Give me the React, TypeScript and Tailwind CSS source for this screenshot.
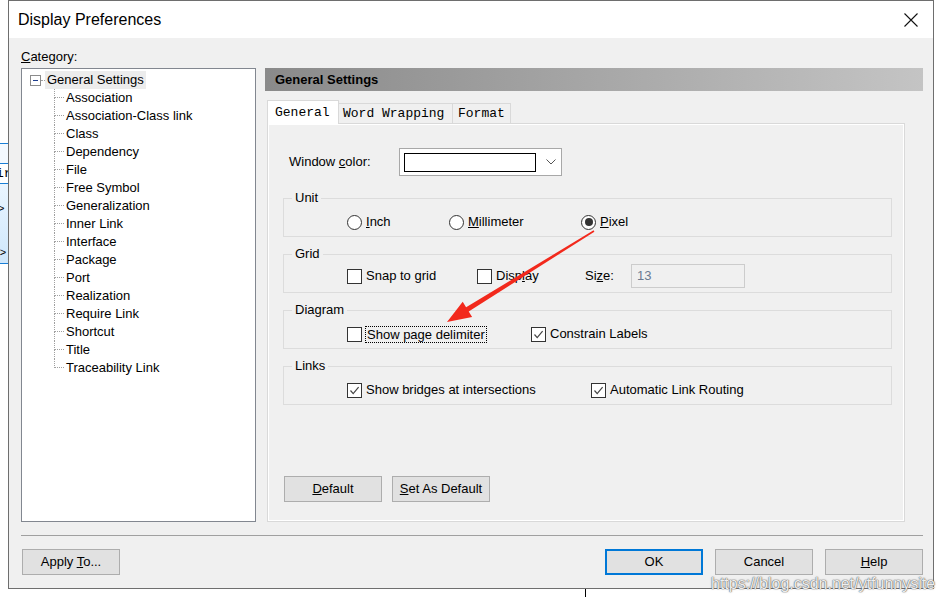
import * as React from "react";

const treeItems = [
  "Association",
  "Association-Class link",
  "Class",
  "Dependency",
  "File",
  "Free Symbol",
  "Generalization",
  "Inner Link",
  "Interface",
  "Package",
  "Port",
  "Realization",
  "Require Link",
  "Shortcut",
  "Title",
  "Traceability Link",
];

function CheckBox({ checked }: { checked?: boolean }) {
  return (
    <span className="flex h-[15px] w-[15px] shrink-0 items-center justify-center border border-[#333333] bg-white">
      {checked && (
        <svg width="13" height="13" viewBox="0 0 13 13">
          <path d="M2.5 6.5 L5.2 9.6 L10.6 3.2" fill="none" stroke="#444" strokeWidth="1.2" />
        </svg>
      )}
    </span>
  );
}

function Radio({ checked }: { checked?: boolean }) {
  return (
    <span className="flex h-[15px] w-[15px] shrink-0 items-center justify-center rounded-full border border-[#333333] bg-white">
      {checked && <span className="h-[8px] w-[8px] rounded-full bg-[#333333]" />}
    </span>
  );
}

function Option({
  width,
  radio,
  checked,
  children,
  focus,
}: {
  width: number;
  radio?: boolean;
  checked?: boolean;
  children: React.ReactNode;
  focus?: boolean;
}) {
  return (
    <div className="flex shrink-0 items-center" style={{ width }}>
      {radio ? <Radio checked={checked} /> : <CheckBox checked={checked} />}
      <span
        className={
          focus
            ? "ml-[3px] border border-dotted border-black px-[1px] leading-[15px]"
            : "ml-[4px] leading-[16px]"
        }
      >
        {children}
      </span>
    </div>
  );
}

function Group({
  label,
  children,
  tall,
}: {
  label: string;
  children: React.ReactNode;
  tall?: boolean;
}) {
  return (
    <fieldset
      className={
        tall
          ? "ml-[14px] w-[609px] border border-[#dcdcdc] pb-[4px]"
          : "ml-[14px] w-[609px] border border-[#dcdcdc] pb-[3px]"
      }
    >
      <legend className="ml-[8px] px-[3px] leading-[16px]">{label}</legend>
      <div
        className={
          tall
            ? "mt-[2px] flex h-[24px] items-center pl-[63px]"
            : "mt-[5px] flex h-[22px] items-center pl-[63px]"
        }
      >
        {children}
      </div>
    </fieldset>
  );
}

function Btn({
  children,
  primary,
}: {
  children: React.ReactNode;
  primary?: boolean;
}) {
  return (
    <button
      type="button"
      className={
        primary
          ? "flex h-[26px] w-[98px] items-center justify-center border-2 border-[#0078d7] bg-[#e1e1e1] text-[13px]"
          : "flex h-[26px] w-[98px] items-center justify-center border border-[#adadad] bg-[#e1e1e1] text-[13px]"
      }
    >
      <span>{children}</span>
    </button>
  );
}

function Tree() {
  return (
    <div className="h-[454px] w-[235px] shrink-0 border border-[#828790] bg-white pt-[2px] text-[13px]">
      <div className="flex h-[18px] items-center pl-[8px]">
        <span className="flex h-[11px] w-[11px] items-center justify-center border border-[#8c8c8c] bg-white">
          <span className="h-px w-[5px] bg-[#1f3f8f]" />
        </span>
        <span className="w-[4px] border-b border-dotted border-[#a0a0a0]" />
        <span className="flex h-[18px] items-center bg-[#ececec] px-[2px]">General Settings</span>
      </div>
      {treeItems.map((item, i) => (
        <div key={item} className="flex h-[18px] pl-[32px]">
          <div className="flex w-[10px] flex-col">
            <span className="h-[9px] border-b border-l border-dotted border-[#a0a0a0]" />
            <span
              className={
                i === treeItems.length - 1
                  ? "h-[9px]"
                  : "h-[9px] border-l border-dotted border-[#a0a0a0]"
              }
            />
          </div>
          <span className="ml-[2px] leading-[18px]">{item}</span>
        </div>
      ))}
    </div>
  );
}

function SettingsPanel() {
  return (
    <div className="ml-[9px] flex w-[658px] flex-col">
      <div className="flex h-[23px] items-center bg-gradient-to-r from-[#8a8a8a] to-[#c4c4c4] pl-[10px] text-[13px] font-bold">
        General Settings
      </div>
      <div className="ml-[2px] mt-[10px] flex h-[22px] items-end font-['Liberation_Mono',monospace] text-[13px]">
        <div className="relative z-10 mb-[-1px] flex h-[24px] w-[72px] items-center border-x border-t border-[#d9d9d9] bg-white pl-[7px]">
          General
        </div>
        <div className="flex h-[20px] w-[114px] items-center border-r border-t border-[#d9d9d9] bg-[#f0f0f0] pl-[4px]">
          Word Wrapping
        </div>
        <div className="flex h-[20px] w-[58px] items-center border-r border-t border-[#d9d9d9] bg-[#f0f0f0] pl-[5px]">
          Format
        </div>
      </div>
      <div className="ml-[2px] h-[399px] w-[638px] border border-[#d9d9d9]">
        <div className="h-full border border-white pt-[23px]">
          <div className="flex h-[28px] items-center pl-[20px]">
            <span className="w-[110px]">
              Window <u>c</u>olor:
            </span>
            <div className="flex h-[28px] w-[163px] items-center border border-[#a8a8a8] bg-white pl-[4px]">
              <span className="h-[19px] w-[132px] border border-black bg-white" />
              <svg className="ml-[10px]" width="10" height="6" viewBox="0 0 10 6">
                <path d="M0.5 0.5 L5 5 L9.5 0.5" fill="none" stroke="#555" strokeWidth="1" />
              </svg>
            </div>
          </div>
          <div className="mt-[14px] flex flex-col gap-[9px]">
            <Group label="Unit">
              <Option width={102} radio>
                <u>I</u>nch
              </Option>
              <Option width={132} radio>
                <u>M</u>illimeter
              </Option>
              <Option width={80} radio checked>
                <u>P</u>ixel
              </Option>
            </Group>
            <Group label="Grid" tall>
              <Option width={130}>
                Snap to <u>g</u>rid
              </Option>
              <Option width={108}>
                Disp<u>l</u>ay
              </Option>
              <span className="w-[46px] shrink-0">
                Si<u>z</u>e:
              </span>
              <div className="flex h-[24px] w-[114px] items-center border border-[#cccccc] bg-[#f0f0f0] pl-[5px] text-[#6b7a90]">
                13
              </div>
            </Group>
            <Group label="Diagram">
              <Option width={184} focus>
                Show page delimiter
              </Option>
              <Option width={140} checked>
                Constrain Labels
              </Option>
            </Group>
            <Group label="Links">
              <Option width={244} checked>
                Show bridges at intersections
              </Option>
              <Option width={180} checked>
                Automatic Link Routing
              </Option>
            </Group>
          </div>
          <div className="ml-[15px] mt-[71px] flex gap-[10px]">
            <Btn>
              <u>D</u>efault
            </Btn>
            <Btn>
              <u>S</u>et As Default
            </Btn>
          </div>
        </div>
      </div>
    </div>
  );
}

function Dialog() {
  return (
    <div className="flex h-[589px] w-[926px] shrink-0 flex-col border border-[#6e6e6e]">
      <div className="flex h-[37px] items-center justify-between bg-white pl-[9px] pr-[15px]">
        <span className="text-[16px]">Display Preferences</span>
        <svg width="14" height="14" viewBox="0 0 14 14">
          <path d="M0.5 0.5 L13.5 13.5 M13.5 0.5 L0.5 13.5" stroke="#111" strokeWidth="1.1" />
        </svg>
      </div>
      <div className="flex flex-1 flex-col bg-[#f0f0f0] pl-[12px] pr-[10px] pt-[11px] text-[13px]">
        <div className="h-[16px] leading-[16px]">
          <u>C</u>ategory:
        </div>
        <div className="mt-[3px] flex">
          <Tree />
          <SettingsPanel />
        </div>
        <div className="mt-[13px] h-px bg-[#a0a0a0]" />
        <div className="mt-[13px] flex items-center">
          <div className="ml-[1px]">
            <Btn>
              Apply <u>T</u>o...
            </Btn>
          </div>
          <div className="ml-auto flex gap-[12px]">
            <Btn primary>OK</Btn>
            <Btn>Cancel</Btn>
            <Btn>
              <u>H</u>elp
            </Btn>
          </div>
        </div>
      </div>
    </div>
  );
}

export default function App() {
  return (
    <div className="relative flex h-[597px] w-[942px] flex-col overflow-hidden bg-white font-['Liberation_Sans',Arial,sans-serif] text-black">
      <div className="flex h-[589px]">
        <div className="flex w-[8px] shrink-0 flex-col overflow-hidden">
          <div className="h-[143px]" />
          <div className="h-px bg-[#1a7fd6]" />
          <div className="h-[19px] bg-[#f3f9ff]" />
          <div className="h-px bg-[#1a7fd6]" />
          <div className="h-[19px] bg-white font-['Liberation_Mono',monospace] text-[13px] leading-[19px]">
            <span className="-ml-[4px]">ir</span>
          </div>
          <div className="h-px bg-[#1a7fd6]" />
          <div className="flex h-[79px] flex-col bg-gradient-to-b from-[#eaf5ff] to-[#cfe7fb] text-[11px] leading-[12px]">
            <span className="mt-[18px] -ml-[2px]">&gt;</span>
            <span className="mt-[32px] -ml-[4px]">r&gt;</span>
          </div>
          <div className="h-px bg-[#1a7fd6]" />
        </div>
        <Dialog />
        <div className="w-[8px] shrink-0" />
      </div>
      <div className="h-[8px]">
        <div className="ml-[585px] h-full w-px bg-black" />
      </div>

      <svg className="pointer-events-none absolute left-0 top-0" width="942" height="597" viewBox="0 0 942 597">
        <polygon
          points="593.6,230.3 594.4,231.7 468.7,311.5 472.1,317.1 447,322 462.7,301.7 466.1,307.3"
          fill="#f2291c"
        />
      </svg>

      <span className="pointer-events-none absolute left-[711px] top-[574px] text-[16px] leading-[20px] text-white/90 [text-shadow:0_0_1px_rgba(80,80,80,0.9),0_0_1px_rgba(80,80,80,0.9),0_0_2px_rgba(120,120,120,0.5)]">
        https://blog.csdn.net/ytfunnysite
      </span>
    </div>
  );
}
